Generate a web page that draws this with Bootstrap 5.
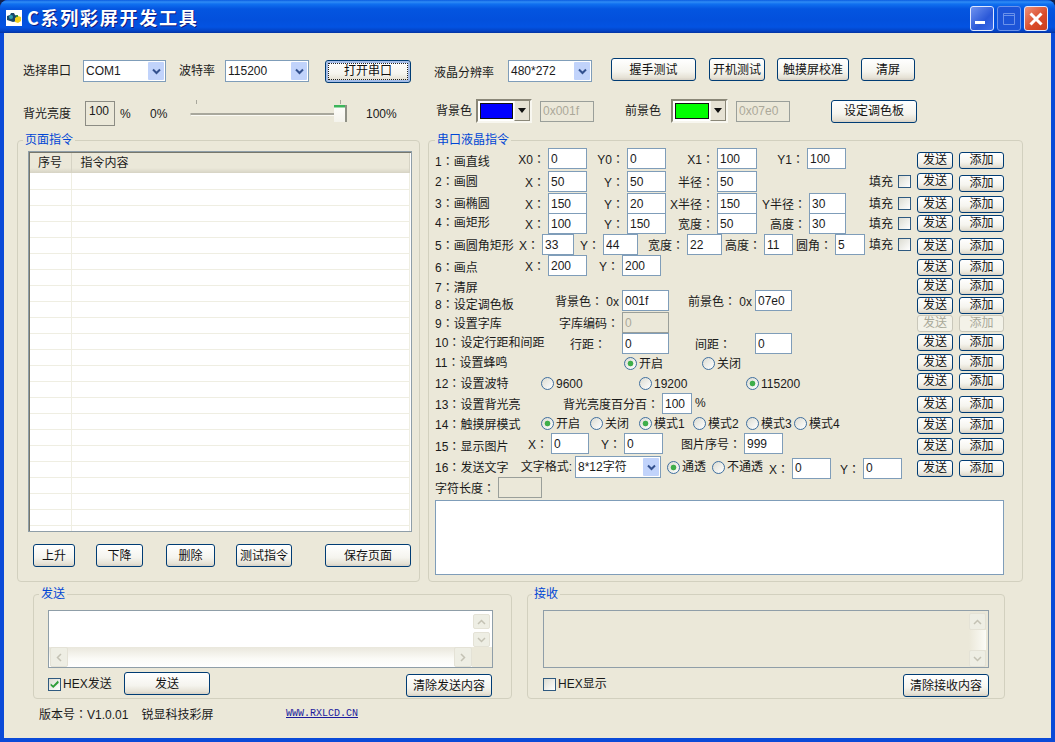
<!DOCTYPE html>
<html lang="zh-CN">
<head>
    <meta charset="utf-8">
    <title>C系列彩屏开发工具</title>
    <link href="https://cdn.jsdelivr.net/npm/bootstrap@5.3.2/dist/css/bootstrap.min.css" rel="stylesheet">
    <script src="https://cdn.jsdelivr.net/npm/bootstrap@5.3.2/dist/js/bootstrap.bundle.min.js"></script>
    <style>
        html, body {
            width: 1055px;
            height: 742px;
            overflow: hidden;
            background: #12224f;
        }
        body {
            font-family: "Liberation Sans", "Noto Sans CJK SC", sans-serif;
            font-size: 12px;
            line-height: 14px;
            color: #1a1a1a;
        }
        .tc-colon { font-family: "Noto Sans CJK TC", sans-serif; }
        .xp-window {
            width: 1055px;
            height: 742px;
            border-radius: 8px 8px 0 0;
            overflow: hidden;
            background: #0a4ad8;
        }
        .xp-title {
            height: 33px;
            flex: none;
            background: linear-gradient(to bottom, #0a5be0 0, #2f8cf5 2px, #1070f0 4px, #0455e0 9px, #0350dc 20px, #0353e2 27px, #0342c4 31px, #0433a0 33px);
            color: #fff;
        }
        .xp-icon { margin: 10px 5px 0 6px; }
        .xp-title h1 {
            font-family: "Noto Sans CJK SC", sans-serif;
            font-size: 18px;
            font-weight: 700;
            letter-spacing: 1.750px;
            line-height: 35px;
            margin: 0;
            text-shadow: 1px 1px 0 #0f1a80;
        }
        .title-btn {
            width: 24px;
            height: 25px;
            border: 1px solid #dfe8ff;
            border-radius: 3px;
            padding: 0;
            margin-left: 3px;
            background: linear-gradient(135deg, #6f93ef, #2a58d8 60%, #3c6cea);
        }
        .title-btn.is-max { background: #1d55d8; border-color: #6c93ea; }
        .title-btn.is-close { background: linear-gradient(135deg, #ee9078, #d94a28 60%, #c8401f); }
        .win-btns { margin: 6px 7px 0 0; }

        .xp-body {
            flex: 1 1 auto;
            margin: 0 4px 4px;
            background: #ebe8d9;
            min-height: 0;
        }
        .bar-one { height: 26px; margin-top: 25px; padding-left: 19px; }
        .bar-two { height: 27px; margin-top: 15px; padding-left: 19px; }
        .bar-two .bar-left { height: 27px; padding-top: 2px; }
        .bar-two .bar-right { height: 24px; }
        .nudge-low { padding-top: 4px; }
        .main-row { height: 449px; margin-top: 7px; padding-left: 13px; }
        .low-row { height: 112px; margin-top: 5px; padding-left: 29px; }
        .foot-row { padding: 8px 0 0 35px; }

        /* classic group boxes */
        .xp-group {
            border: 1px solid #d2d0bf;
            border-radius: 4px;
            padding: 0;
            flex: none;
        }
        .xp-group legend {
            float: none;
            width: auto;
            margin: 0;
            padding: 0 2px;
            font-size: 12px;
            line-height: 14px;
            color: #0046d5;
        }
        .group-page { width: 403px; padding: 4px 0 0 10px; }
        .group-page legend { margin-left: -5px; }
        .group-lcd { width: 595px; margin-left: 8px; padding: 1px 0 0 6px; }
        .group-send { width: 479px; padding: 9px 0 0 14px; }
        .group-send legend { margin-left: -9px; }
        .group-recv { width: 478px; margin-left: 15px; padding: 9px 0 0 15px; }
        .group-recv legend { margin-left: -11px; }

        /* xp controls */
        .xp-btn {
            height: 23px;
            padding: 0;
            flex: none;
            border: 1px solid #003c74;
            border-radius: 3px;
            font-size: 12px;
            line-height: 14px;
            color: #111;
            background: linear-gradient(to bottom, #fff 0, #f5f4ee 60%, #e6e2d6 88%, #d6d0c5 100%);
        }
        .xp-btn:disabled {
            border-color: #c9c7ba;
            color: #a8a898;
            background: #f3f2e8;
            opacity: 1;
        }
        .xp-btn.is-default {
            box-shadow: inset 0 0 0 2px #a5bde8;
            outline: 1px dotted #222;
            outline-offset: -4px;
        }
        .xp-input {
            height: 21px;
            min-height: 0;
            padding: 0 2px;
            flex: none;
            border: 1px solid #7f9db9;
            border-radius: 0;
            font-size: 12px;
            line-height: 14px;
            color: #1a1a1a;
            background: #fff;
        }
        .xp-input:disabled { background: #ebe8d9; color: #aca899; border-color: #9a9f9a; }
        .xp-text { resize: none; }
        .xp-combo {
            height: 22px;
            flex: none;
            padding: 1px 1px 1px 2px;
            border: 1px solid #7f9db9;
            background: #fff;
            line-height: 18px;
        }
        .combo-arrow {
            width: 16px;
            height: 18px;
            border-radius: 1px;
            background: #c1d3fb;
            margin-top: 0;
        }
        .xp-swatch {
            height: 24px;
            flex: none;
            border: 2px solid;
            border-color: #8a8778 #f8f7f0 #f8f7f0 #8a8778;
            background: #fff;
        }
        .swatch-fill { height: 16px; margin: 2px 0 0 2px; border: 1px solid #111; }
        .fill-blue { background: #0000ff; width: 33px; }
        .fill-green { background: #00ff00; width: 34px; }
        .swatch-arrow {
            width: 16px;
            margin-left: auto;
            background: #e6e2d4;
            border-left: 1px solid #f8f7f0;
            border-right: 1px solid #8a8778;
            border-bottom: 1px solid #8a8778;
        }
        .swatch-arrow i {
            border-left: 4px solid transparent;
            border-right: 4px solid transparent;
            border-top: 5px solid #111;
        }
        .readout {
            height: 25px;
            padding: 2px 0 0 3px;
            border: 1px solid #8c8c84;
            flex: none;
        }
        .xp-slider { position: relative; height: 27px; flex: none; }
        .slider-track {
            position: absolute;
            left: 0;
            top: 13px;
            right: 12px;
            height: 3px;
            background: #a8a79c;
            border-bottom: 1px solid #fbfaf4;
            border-left: 1px solid #c8c7bb;
        }
        .slider-tick { position: absolute; top: 0; width: 1px; height: 4px; background: #a8a79c; }
        .tick-a { left: 6px; }
        .tick-b { left: 150px; }
        .slider-thumb {
            position: absolute;
            left: 144px;
            top: 5px;
            width: 13px;
            height: 17px;
            background: linear-gradient(to bottom, #3cb55a 0, #3cb55a 2px, #fcfcf8 3px, #f4f3ec 100%);
            border-right: 2px solid #8f9085;
        }
        .xp-rb {
            appearance: none;
            width: 13px;
            height: 13px;
            margin: 0 2px 0 0;
            flex: none;
            border: 1px solid #3f6f9f;
            border-radius: 50%;
            background: linear-gradient(135deg, #dcdcd2, #fff);
        }
        .xp-rb:checked {
            background: radial-gradient(circle, #3fae4a 0, #3fae4a 2.5px, transparent 3.2px), linear-gradient(135deg, #dcdcd2, #fff);
        }
        .xp-chk {
            appearance: none;
            width: 13px;
            height: 13px;
            margin: 0;
            flex: none;
            border: 1px solid #2f5a80;
            background: linear-gradient(135deg, #dcdcd2, #fff);
            position: relative;
        }
        .xp-chk:checked::before {
            content: "";
            position: absolute;
            inset: 1px;
            background: #2f9e3a;
            clip-path: polygon(8% 45%, 35% 68%, 88% 12%, 98% 35%, 36% 95%, 6% 68%);
        }
        .rb-item { height: 21px; flex: none; white-space: nowrap; }
        .fill-item { margin-left: auto; height: 21px; padding-right: 1px; }
        .fill-item .xp-chk { margin-left: 5px; }

        /* list view */
        .xp-list {
            width: 384px;
            height: 381px;
            border: 1px solid #8f9ea8;
            padding: 1px;
            background: #fff;
            box-shadow: inset 1px 1px 0 #77776c;
            overflow: hidden;
        }
        .xp-list table {
            width: 100%;
            table-layout: fixed;
            border-collapse: collapse;
        }
        .xp-list th {
            height: 20px;
            padding: 0 0 0 8px;
            font-weight: 400;
            background: linear-gradient(to bottom, #ebe8d9 0, #ebe8d9 15px, #d6d3c4 20px);
            border-right: 1px solid #d6d3c4;
        }
        .xp-list th:first-child { width: 41px; }
        .xp-list th:last-child { padding-left: 9px; }
        .xp-list td {
            height: 16px;
            padding: 0;
            border-bottom: 1px solid #efeee2;
            border-right: 1px solid #efeee2;
        }
        .page-btns { margin-top: 12px; padding-left: 5px; }

        /* lcd command table */
        .cmd-area { height: 329px; }
        .cmd-labels {
            width: 80px;
            flex: none;
            display: grid;
            margin-top: 6px;
            grid-template-rows: 20px 22px 19px 23px 22px 20px 17px 19px 19px 20px 21px 21px 20px 22px 21px 21px;
            white-space: nowrap;
        }
        .cmd-fields {
            width: 397px;
            flex: none;
            display: grid;
            grid-template-rows: 23px 22px 20px 21px 21px 21px 14px 22px 21px 20px 20px 20px 20px 20px 24px 20px;
        }
        .cmd-btns {
            width: 87px;
            flex: none;
            margin: 4px 0 0 5px;
            display: grid;
            grid-template-rows: 21px 23px 19px 23px 21px 19px 19px 18px 19px 20px 19px 23px 21px 21px 22px 17px;
        }
        .cmd-btns .xp-btn { height: 17px; width: 36px; line-height: 13px; }
        .cmd-btns .xp-btn + .xp-btn { width: 45px; margin-left: 6px; }
        .cmd-btns > div:nth-child(2) .xp-btn + .xp-btn { margin-top: 2px; }
        .cell {
            height: 21px;
            flex: none;
            line-height: 21px;
            text-align: right;
            padding-right: 3px;
            white-space: nowrap;
        }
        .nudge-three { margin-top: 2px; }
        .len-row { height: 21px; }
        .len-label { width: 63px; line-height: 21px; flex: none; }
        .send-box {
            width: 569px;
            height: 75px;
            margin-top: 2px;
        }

        /* scroll boxes */
        .xp-scrollbox {
            display: grid;
            grid-template-columns: 1fr 20px;
            grid-template-rows: 1fr 20px;
            width: 446px;
            height: 58px;
            border: 1px solid #8f9ea8;
            background: #fff;
        }
        .group-send .xp-scrollbox { width: 445px; }
        .xp-scrollbox.is-disabled {
            grid-template-rows: 1fr;
            background: #ebe8d9;
        }
        .scroll-v { padding: 2px 2px 0 1px; }
        .group-send .scroll-v { padding-top: 3px; gap: 3px; }
        .scroll-h {
            grid-column: 1;
            padding: 0 0 0 1px;
            background: linear-gradient(to bottom, #e9e7dc, #fbfbf7 60%, #fff);
        }
        .scroll-corner { background: #ebe8d9; }
        .sb-btn {
            width: 17px;
            height: 17px;
            flex: none;
            border: 1px solid #e4e2d6;
            border-radius: 2px;
            background: #eeeee4;
        }
        .group-send .scroll-v .sb-btn { height: 15px; }
        .scroll-h .sb-btn { height: 20px; width: 18px; }
        .sb-mid { flex: 1 1 auto; background: linear-gradient(to right, #ebe8d9, #fbfbf6); }
        .send-foot { height: 31px; width: 446px; padding-top: 4px; }
        .group-send .send-foot { width: 445px; }
        .send-foot .wide-btn { width: 86px; height: 23px; }
        .chk-item { width: 76px; flex: none; margin-top: 5px; }
        .chk-item .xp-chk { margin-right: 2px; }
        .send-foot .clear-btn { margin-top: 2px; width: 86px; height: 23px; margin-left: auto; margin-right: 1px; }
        .recv-foot .clear-btn { margin-right: 0; }
        .site-link {
            font-family: "Liberation Mono", monospace;
            font-size: 10px;
            color: #1a1a9c;
        }

        .wd-25 { width: 25px; } .wd-27 { width: 27px; }
        .wd-29 { width: 29px; } .wd-30 { width: 30px; } .wd-32 { width: 32px; }
        .wd-33 { width: 33px; } .wd-35 { width: 35px; } .wd-36 { width: 36px; }
        .wd-37 { width: 37px; } .wd-38 { width: 38px; } .wd-39 { width: 39px; }
        .wd-40 { width: 40px; } .wd-42 { width: 42px; } .wd-44 { width: 44px; }
        .wd-45 { width: 45px; } .wd-46 { width: 46px; } .wd-47 { width: 47px; }
        .wd-48 { width: 48px; } .wd-49 { width: 49px; } .wd-50 { width: 50px; }
        .wd-51 { width: 51px; } .wd-52 { width: 52px; } .wd-53 { width: 53px; }
        .wd-54 { width: 54px; } .wd-55 { width: 55px; } .wd-56 { width: 56px; }
        .wd-57 { width: 57px; } .wd-60 { width: 60px; } .wd-62 { width: 62px; }
        .wd-70 { width: 70px; } .wd-72 { width: 72px; } .wd-74 { width: 74px; }
        .wd-78 { width: 78px; } .wd-81 { width: 81px; } .wd-83 { width: 83px; }
        .wd-84 { width: 84px; } .wd-85 { width: 85px; } .wd-86 { width: 86px; }
        .wd-98 { width: 98px; } .wd-107 { width: 107px; } .wd-147 { width: 147px; }
        .wd-157 { width: 157px; } .wd-247 { width: 247px; }
        .ml-3 { margin-left: 3px; } .ml-5 { margin-left: 5px; } .ml-6 { margin-left: 6px; }
        .ml-8 { margin-left: 8px; } .ml-12 { margin-left: 12px; } .ml-13 { margin-left: 13px; }
        .ml-16 { margin-left: 16px; } .ml-19 { margin-left: 19px; }
        .ml-21 { margin-left: 21px; } .ml-23 { margin-left: 23px; } .ml-26 { margin-left: 26px; }
        .ml-31 { margin-left: 31px; } .ml-33 { margin-left: 33px; } .ml-41 { margin-left: 41px; }
        .ml-109 { margin-left: 109px; }
    </style>
</head>
<body>
    <div class="xp-window d-flex flex-column">
        <div class="xp-title d-flex align-items-start">
            <svg class="xp-icon" width="16" height="16" viewBox="0 0 16 16">
                <rect width="16" height="16" fill="#fff"/>
                <path d="M1 6l3-1 1-2h3l1 2 2 1v5l-4 1-6-2z" fill="#17476b"/>
                <circle cx="5" cy="7" r="2" fill="#2f9fb0"/>
                <path d="M9 8l3-2 3 1v4l-3 2-3-1z" fill="#f2d21c"/>
                <path d="M10 5h2v2h-2z" fill="#3a8f3a"/>
            </svg>
            <h1>C系列彩屏开发工具</h1>
            <div class="win-btns ms-auto d-flex">
                <button class="title-btn d-flex align-items-end justify-content-center" type="button" aria-label="最小化">
                    <svg class="mb-1" width="16" height="6" viewBox="0 0 16 6"><rect x="1" y="1" width="10" height="3" fill="#fff"/></svg>
                </button>
                <button class="title-btn is-max d-flex align-items-center justify-content-center" type="button" aria-label="最大化">
                    <svg width="16" height="16" viewBox="0 0 16 16"><path d="M2.500 2.500h11v11h-11z M2.500 4.500h11" fill="none" stroke="#6c93ea" stroke-width="1"/></svg>
                </button>
                <button class="title-btn is-close d-flex align-items-center justify-content-center" type="button" aria-label="关闭">
                    <svg width="16" height="16" viewBox="0 0 16 16"><path d="M2.500 2.500l11 11M13.500 2.500l-11 11" fill="none" stroke="#fff" stroke-width="3"/></svg>
                </button>
            </div>
        </div>

        <div class="xp-body d-flex flex-column">
            <div class="bar-one d-flex align-items-center">
                <span class="wd-60">选择串口</span>
                <div class="xp-combo wd-83 d-flex justify-content-between">COM1<span class="combo-arrow d-flex align-items-center justify-content-center"><svg width="9" height="7" viewBox="0 0 9 7"><path d="M1 1.500l3.500 3.500 3.500-3.500" fill="none" stroke="#33518f" stroke-width="2"/></svg></span></div>
                <span class="wd-46 ml-13">波特率</span>
                <div class="xp-combo wd-84 d-flex justify-content-between">115200<span class="combo-arrow d-flex align-items-center justify-content-center"><svg width="9" height="7" viewBox="0 0 9 7"><path d="M1 1.500l3.500 3.500 3.500-3.500" fill="none" stroke="#33518f" stroke-width="2"/></svg></span></div>
                <button class="btn xp-btn is-default wd-86 ml-16" type="button">打开串口</button>
                <span class="wd-74 ml-23 nudge-low">液晶分辨率</span>
                <div class="xp-combo wd-84 d-flex justify-content-between">480*272<span class="combo-arrow d-flex align-items-center justify-content-center"><svg width="9" height="7" viewBox="0 0 9 7"><path d="M1 1.500l3.500 3.500 3.500-3.500" fill="none" stroke="#33518f" stroke-width="2"/></svg></span></div>
                <button class="btn xp-btn wd-85 ml-19 align-self-start" type="button">握手测试</button>
                <button class="btn xp-btn wd-56 ml-13 align-self-start" type="button">开机测试</button>
                <button class="btn xp-btn wd-72 ml-12 align-self-start" type="button">触摸屏校准</button>
                <button class="btn xp-btn wd-54 ml-12 align-self-start" type="button">清屏</button>
            </div>

            <div class="bar-two d-flex align-items-start">
                <div class="bar-left d-flex align-items-center">
                    <span class="wd-62">背光亮度</span>
                    <div class="readout wd-30">100</div>
                    <span class="wd-30 ml-5">%</span>
                    <span class="wd-40">0%</span>
                    <div class="xp-slider wd-157">
                        <span class="slider-tick tick-a"></span>
                        <span class="slider-tick tick-b"></span>
                        <span class="slider-track"></span>
                        <span class="slider-thumb"></span>
                    </div>
                    <span class="wd-70 ml-19">100%</span>
                </div>
                <div class="bar-right d-flex align-items-center">
                    <span class="wd-40">背景色</span>
                    <div class="xp-swatch wd-56 d-flex">
                        <span class="swatch-fill fill-blue"></span>
                        <span class="swatch-arrow d-flex align-items-center justify-content-center"><i></i></span>
                    </div>
                    <input class="form-control xp-input wd-54 ml-8" value="0x001f" disabled>
                    <span class="wd-46 ml-31">前景色</span>
                    <div class="xp-swatch wd-57 d-flex">
                        <span class="swatch-fill fill-green"></span>
                        <span class="swatch-arrow d-flex align-items-center justify-content-center"><i></i></span>
                    </div>
                    <input class="form-control xp-input wd-54 ml-8" value="0x07e0" disabled>
                    <button class="btn xp-btn wd-86 ml-41" type="button">设定调色板</button>
                </div>
            </div>

            <div class="main-row d-flex">
                <fieldset class="xp-group group-page">
                    <legend>页面指令</legend>
                    <div class="xp-list">
                        <table>
                            <thead><tr><th>序号</th><th>指令内容</th></tr></thead>
                            <tbody id="pageRows"></tbody>
                        </table>
                    </div>
                    <div class="page-btns d-flex">
                        <button class="btn xp-btn wd-42" type="button">上升</button>
                        <button class="btn xp-btn wd-47 ml-21" type="button">下降</button>
                        <button class="btn xp-btn wd-49 ml-23" type="button">删除</button>
                        <button class="btn xp-btn wd-56 ml-21" type="button">测试指令</button>
                        <button class="btn xp-btn wd-86 ml-33" type="button">保存页面</button>
                    </div>
                </fieldset>

                <fieldset class="xp-group group-lcd">
                    <legend>串口液晶指令</legend>
                    <div class="cmd-area d-flex">
                        <div class="cmd-labels">
                            <div>1：画直线</div>
                            <div>2：画圆</div>
                            <div>3：画椭圆</div>
                            <div>4：画矩形</div>
                            <div>5：画圆角矩形</div>
                            <div>6：画点</div>
                            <div>7：清屏</div>
                            <div>8：设定调色板</div>
                            <div>9：设置字库</div>
                            <div>10：设定行距和间距</div>
                            <div>11：设置蜂鸣</div>
                            <div>12：设置波特</div>
                            <div>13：设置背光亮</div>
                            <div>14：触摸屏模式</div>
                            <div>15：显示图片</div>
                            <div>16：发送文字</div>
                        </div>

                        <div class="cmd-fields">
                            <div class="d-flex align-items-start">
                                <span class="cell wd-33">X0：</span><input class="form-control xp-input wd-39" value="0">
                                <span class="cell wd-40">Y0：</span><input class="form-control xp-input wd-39" value="0">
                                <span class="cell wd-51">X1：</span><input class="form-control xp-input wd-40" value="100">
                                <span class="cell wd-50">Y1：</span><input class="form-control xp-input wd-39" value="100">
                            </div>
                            <div class="d-flex align-items-start">
                                <span class="cell wd-33">X：</span><input class="form-control xp-input wd-39" value="50">
                                <span class="cell wd-40">Y：</span><input class="form-control xp-input wd-39" value="50">
                                <span class="cell wd-51">半径：</span><input class="form-control xp-input wd-40" value="50">
                                <div class="fill-item d-flex align-items-center">填充<input class="xp-chk" type="checkbox"></div>
                            </div>
                            <div class="d-flex align-items-start">
                                <span class="cell wd-33">X：</span><input class="form-control xp-input wd-39" value="150">
                                <span class="cell wd-40">Y：</span><input class="form-control xp-input wd-39" value="20">
                                <span class="cell wd-51">X半径：</span><input class="form-control xp-input wd-40" value="150">
                                <span class="cell wd-52">Y半径：</span><input class="form-control xp-input wd-37" value="30">
                                <div class="fill-item d-flex align-items-center">填充<input class="xp-chk" type="checkbox"></div>
                            </div>
                            <div class="d-flex align-items-start">
                                <span class="cell wd-33">X：</span><input class="form-control xp-input wd-39" value="100">
                                <span class="cell wd-40">Y：</span><input class="form-control xp-input wd-39" value="150">
                                <span class="cell wd-51">宽度：</span><input class="form-control xp-input wd-40" value="50">
                                <span class="cell wd-52">高度：</span><input class="form-control xp-input wd-37" value="30">
                                <div class="fill-item d-flex align-items-center">填充<input class="xp-chk" type="checkbox"></div>
                            </div>
                            <div class="d-flex align-items-start">
                                <span class="cell wd-27">X：</span><input class="form-control xp-input wd-32" value="33">
                                <span class="cell wd-29">Y：</span><input class="form-control xp-input wd-35" value="44">
                                <span class="cell wd-49">宽度：</span><input class="form-control xp-input wd-35" value="22">
                                <span class="cell wd-42">高度：</span><input class="form-control xp-input wd-29" value="11">
                                <span class="cell wd-42">圆角：</span><input class="form-control xp-input wd-30" value="5">
                                <div class="fill-item d-flex align-items-center">填充<input class="xp-chk" type="checkbox"></div>
                            </div>
                            <div class="d-flex align-items-start">
                                <span class="cell wd-33">X：</span><input class="form-control xp-input wd-39" value="200">
                                <span class="cell wd-35">Y：</span><input class="form-control xp-input wd-39" value="200">
                            </div>
                            <div></div>
                            <div class="d-flex align-items-start">
                                <span class="cell wd-107">背景色：&nbsp;0x</span><input class="form-control xp-input wd-47" value="001f">
                                <span class="cell wd-86">前景色：&nbsp;0x</span><input class="form-control xp-input wd-37" value="07e0">
                            </div>
                            <div class="d-flex align-items-start">
                                <span class="cell wd-107">字库编码：</span><input class="form-control xp-input wd-47" value="0" disabled>
                            </div>
                            <div class="d-flex align-items-start">
                                <span class="cell wd-107 pe-3">行距：</span><input class="form-control xp-input wd-47" value="0">
                                <span class="cell wd-86 pe-4">间距：</span><input class="form-control xp-input wd-37" value="0">
                            </div>
                            <div class="d-flex align-items-start">
                                <div class="rb-item wd-78 ml-109 d-flex align-items-center"><input class="xp-rb" type="radio" name="beep" checked>开启</div>
                                <div class="rb-item d-flex align-items-center"><input class="xp-rb" type="radio" name="beep">关闭</div>
                            </div>
                            <div class="d-flex align-items-start">
                                <div class="rb-item wd-98 ml-26 d-flex align-items-center"><input class="xp-rb" type="radio" name="baud">9600</div>
                                <div class="rb-item wd-107 d-flex align-items-center"><input class="xp-rb" type="radio" name="baud">19200</div>
                                <div class="rb-item d-flex align-items-center"><input class="xp-rb" type="radio" name="baud" checked>115200</div>
                            </div>
                            <div class="d-flex align-items-start">
                                <span class="cell wd-147">背光亮度百分百：</span><input class="form-control xp-input wd-30" value="100">
                                <span class="cell ml-3">%</span>
                            </div>
                            <div class="d-flex align-items-start">
                                <div class="rb-item wd-49 ml-26 d-flex align-items-center"><input class="xp-rb" type="radio" name="touch" checked>开启</div>
                                <div class="rb-item wd-49 d-flex align-items-center"><input class="xp-rb" type="radio" name="touch">关闭</div>
                                <div class="rb-item wd-54 d-flex align-items-center"><input class="xp-rb" type="radio" name="mode" checked>模式1</div>
                                <div class="rb-item wd-53 d-flex align-items-center"><input class="xp-rb" type="radio" name="mode">模式2</div>
                                <div class="rb-item wd-48 d-flex align-items-center"><input class="xp-rb" type="radio" name="mode">模式3</div>
                                <div class="rb-item d-flex align-items-center"><input class="xp-rb" type="radio" name="mode">模式4</div>
                            </div>
                            <div class="d-flex align-items-start">
                                <span class="cell wd-36">X：</span><input class="form-control xp-input wd-38" value="0">
                                <span class="cell wd-35">Y：</span><input class="form-control xp-input wd-39" value="0">
                                <span class="cell wd-81">图片序号：</span><input class="form-control xp-input wd-39" value="999">
                            </div>
                            <div class="d-flex align-items-center">
                                <span class="cell wd-60">文字格式:</span>
                                <div class="xp-combo wd-86 d-flex justify-content-between">8*12字符<span class="combo-arrow d-flex align-items-center justify-content-center"><svg width="9" height="7" viewBox="0 0 9 7"><path d="M1 1.500l3.500 3.500 3.500-3.500" fill="none" stroke="#33518f" stroke-width="2"/></svg></span></div>
                                <div class="rb-item wd-45 ml-6 d-flex align-items-center"><input class="xp-rb" type="radio" name="trans" checked>通透</div>
                                <div class="rb-item wd-55 d-flex align-items-center"><input class="xp-rb" type="radio" name="trans">不通透</div>
                                <span class="cell wd-25 nudge-three">X：</span><input class="form-control xp-input wd-39 nudge-three" value="0">
                                <span class="cell wd-32 nudge-three">Y：</span><input class="form-control xp-input wd-39 nudge-three" value="0">
                            </div>
                        </div>

                        <div class="cmd-btns" id="cmdBtns"></div>
                    </div>

                    <div class="len-row d-flex">
                        <span class="len-label">字符长度：</span>
                        <input class="form-control xp-input wd-44" disabled>
                    </div>
                    <textarea class="form-control xp-input xp-text send-box"></textarea>
                </fieldset>
            </div>

            <div class="low-row d-flex">
                <fieldset class="xp-group group-send">
                    <legend>发送</legend>
                    <div class="xp-scrollbox">
                        <div></div>
                        <div class="scroll-v d-flex flex-column">
                            <span class="sb-btn d-flex align-items-center justify-content-center"><svg width="9" height="6" viewBox="0 0 9 6"><path d="M1 5l3.500-3.500 3.500 3.500" fill="none" stroke="#c4c2b4" stroke-width="1.500"/></svg></span>
                            <span class="sb-btn d-flex align-items-center justify-content-center"><svg width="9" height="6" viewBox="0 0 9 6"><path d="M1 1l3.500 3.500 3.500-3.500" fill="none" stroke="#c4c2b4" stroke-width="1.500"/></svg></span>
                        </div>
                        <div class="scroll-h d-flex justify-content-between">
                            <span class="sb-btn d-flex align-items-center justify-content-center"><svg width="6" height="9" viewBox="0 0 6 9"><path d="M5 1L1.500 4.500 5 8" fill="none" stroke="#c4c2b4" stroke-width="1.500"/></svg></span>
                            <span class="sb-btn d-flex align-items-center justify-content-center"><svg width="6" height="9" viewBox="0 0 6 9"><path d="M1 1l3.500 3.500L1 8" fill="none" stroke="#c4c2b4" stroke-width="1.500"/></svg></span>
                        </div>
                        <div class="scroll-corner"></div>
                    </div>
                    <div class="send-foot d-flex align-items-start">
                        <div class="chk-item d-flex align-items-center"><input class="xp-chk" type="checkbox" checked>HEX发送</div>
                        <button class="btn xp-btn wide-btn" type="button">发送</button>
                        <button class="btn xp-btn clear-btn" type="button">清除发送内容</button>
                    </div>
                </fieldset>

                <fieldset class="xp-group group-recv">
                    <legend>接收</legend>
                    <div class="xp-scrollbox is-disabled">
                        <div></div>
                        <div class="scroll-v d-flex flex-column">
                            <span class="sb-btn d-flex align-items-center justify-content-center"><svg width="9" height="6" viewBox="0 0 9 6"><path d="M1 5l3.500-3.500 3.500 3.500" fill="none" stroke="#c4c2b4" stroke-width="1.500"/></svg></span>
                            <span class="sb-mid"></span>
                            <span class="sb-btn d-flex align-items-center justify-content-center"><svg width="9" height="6" viewBox="0 0 9 6"><path d="M1 1l3.500 3.500 3.500-3.500" fill="none" stroke="#c4c2b4" stroke-width="1.500"/></svg></span>
                        </div>
                    </div>
                    <div class="send-foot recv-foot d-flex align-items-start">
                        <div class="chk-item d-flex align-items-center"><input class="xp-chk" type="checkbox">HEX显示</div>
                        <button class="btn xp-btn clear-btn" type="button">清除接收内容</button>
                    </div>
                </fieldset>
            </div>

            <div class="foot-row d-flex">
                <span class="wd-247">版本号：V1.0.01<span class="ml-13">锐显科技彩屏</span></span>
                <a class="site-link" href="#">WWW.RXLCD.CN</a>
            </div>
        </div>
    </div>

    <script>
        // list view blank rows
        const pageRows = document.getElementById('pageRows');
        for (let i = 0; i < 23; i++) {
            pageRows.innerHTML += '<tr><td></td><td></td></tr>';
        }

        // send / add button pairs, row 9 is disabled
        const cmdBtns = document.getElementById('cmdBtns');
        for (let i = 1; i <= 16; i++) {
            const off = i === 9 ? ' disabled' : '';
            cmdBtns.innerHTML += `
                <div class="d-flex align-items-start">
                    <button class="btn xp-btn" type="button"${off}>发送</button>
                    <button class="btn xp-btn" type="button"${off}>添加</button>
                </div>`;
        }

        // the zh-CN glyph pushes the full width colon left, the zh-TW one sits in the middle
        document.querySelectorAll('.cell, .cmd-labels div, .len-label, .wd-247').forEach(el => {
            el.innerHTML = el.innerHTML.replace('：', '<span class="tc-colon" lang="zh-TW">：</span>');
        });
    </script>
</body>
</html>
